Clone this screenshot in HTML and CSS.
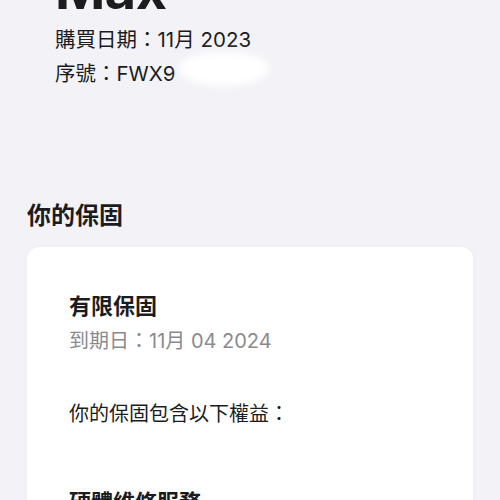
FILE: index.html
```html
<!DOCTYPE html>
<html lang="zh-Hant">
<head>
<meta charset="utf-8">
<title>保固</title>
<link rel="stylesheet" href="styles.css">
</head>
<body>
<header class="device">
  <h1 class="model">Max</h1>
  <p class="info">購買日期：11月 2023</p>
  <p class="info">序號：FWX9<span class="redact"></span></p>
</header>
<section class="warranty">
  <h2 class="section-title">你的保固</h2>
  <div class="card">
    <h3 class="card-title">有限保固</h3>
    <p class="expiry">到期日：11月 04 2024</p>
    <p class="benefits">你的保固包含以下權益：</p>
    <h3 class="card-title service">硬體維修服務</h3>
  </div>
</section>
</body>
</html>
```
FILE: styles.css
```css
html, body {
  margin: 0;
  padding: 0;
}
body {
  background: #f2f2f7;
  color: #1c1c1e;
  font-family: Inter, "Noto Sans CJK TC", sans-serif;
  overflow: hidden;
  height: 500px;
}
p, h1, h2, h3 {
  margin: 0;
}
.device {
  padding-left: 55px;
}
.model {
  font-size: 54px;
  line-height: 54px;
  font-weight: 700;
  margin-top: -37px;
  margin-bottom: 6px;
  letter-spacing: -0.5px;
}
.info {
  font-size: 20.5px;
  line-height: 34px;
  font-weight: 400;
}
.redact {
  display: inline-block;
  width: 92px;
  height: 34px;
  margin: -8px 0 -8px 2px;
  vertical-align: 3.5px;
  background: #ffffff;
  border-radius: 50%;
  filter: blur(4px);
}
.warranty {
  padding: 0 27px;
  margin-top: 109px;
}
.section-title {
  font-size: 24px;
  line-height: 32px;
  font-weight: 700;
}
.card {
  margin-top: 15px;
  background: #ffffff;
  border-radius: 12px;
  padding: 44px 42px 40px;
  box-shadow: 0 0 4px rgba(0, 0, 0, 0.04);
}
.card-title {
  font-size: 22px;
  line-height: 30px;
  font-weight: 700;
}
.expiry {
  margin-top: 5px;
  font-size: 20px;
  line-height: 30px;
  color: #8a8a8e;
}
.benefits {
  margin-top: 43px;
  font-size: 20px;
  line-height: 30px;
}
.service {
  margin-top: 58px;
}
```
